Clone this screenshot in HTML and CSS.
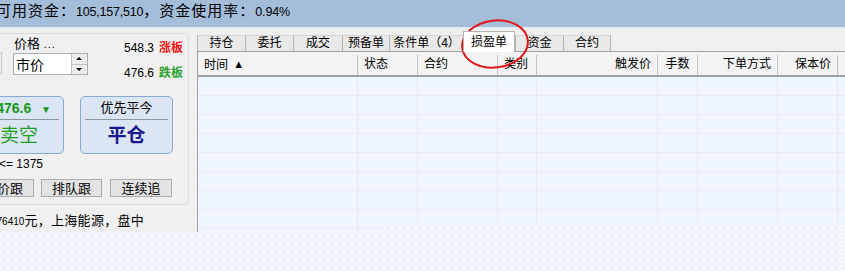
FILE: index.html
```html
<!DOCTYPE html>
<html lang="zh-CN">
<head>
    <meta charset="UTF-8">
    <title>交易面板</title>
    <link rel="stylesheet" href="styles.css">
</head>
<body>
    <!-- account summary -->
    <div class="topbar">
        <span class="topbar-text">可用资金：<span class="num">105,157,510</span>，资金使用率：<span class="num">0.94%</span></span>
    </div>

    <div class="main">
        <!-- order panel -->
        <div class="left">
            <div class="group">
                <div class="price-row">
                    <div class="stub-col"><div class="stub"></div></div>
                    <div class="price-col">
                        <div class="price-label">价格 <span class="dots">...</span></div>
                        <div class="spin">
                            <span class="spin-text">市价</span>
                            <div class="spin-btns">
                                <span class="spin-up"></span>
                                <span class="spin-down"></span>
                            </div>
                        </div>
                    </div>
                    <div class="limits">
                        <div class="limit"><span class="limit-val">548.3</span><span class="limit-up">涨板</span></div>
                        <div class="limit"><span class="limit-val">476.6</span><span class="limit-down">跌板</span></div>
                    </div>
                </div>

                <div class="big-row">
                    <div class="big">
                        <div class="big-top sell-top">476.6 <span class="arrow-down">▼</span></div>
                        <div class="big-main sell-main">卖空</div>
                    </div>
                    <div class="big">
                        <div class="big-top">优先平今</div>
                        <div class="big-main close-main">平仓</div>
                    </div>
                </div>

                <div class="qty">&lt;= 1375</div>

                <div class="small-row">
                    <button class="small-btn">对价跟</button>
                    <button class="small-btn">排队跟</button>
                    <button class="small-btn">连续追</button>
                </div>
            </div>
            <div class="status"><span class="num-s">476410</span>元，上海能源，盘中</div>
        </div>

        <!-- order lists -->
        <div class="right">
            <div class="tabs">
                <div class="tab w48">持仓</div>
                <div class="tab w48">委托</div>
                <div class="tab w49">成交</div>
                <div class="tab w47">预备单</div>
                <div class="tab w74">条件单（4）</div>
                <div class="tab active">损盈单</div>
                <div class="tab w48">资金</div>
                <div class="tab w48">合约</div>
            </div>
            <div class="grid">
                <div class="grid-head">
                    <div class="hcell">时间 <span class="sort">▲</span></div>
                    <div class="hcell">状态</div>
                    <div class="hcell">合约</div>
                    <div class="hcell">类别</div>
                    <div class="hcell right-al">触发价</div>
                    <div class="hcell center-al">手数</div>
                    <div class="hcell right-al">下单方式</div>
                    <div class="hcell right-al">保本价</div>
                    <div class="hcell"></div>
                </div>
                <div class="grid-row"><div></div><div></div><div></div><div></div><div></div><div></div><div></div><div></div><div></div></div>
                <div class="grid-row"><div></div><div></div><div></div><div></div><div></div><div></div><div></div><div></div><div></div></div>
                <div class="grid-row"><div></div><div></div><div></div><div></div><div></div><div></div><div></div><div></div><div></div></div>
                <div class="grid-row"><div></div><div></div><div></div><div></div><div></div><div></div><div></div><div></div><div></div></div>
                <div class="grid-row"><div></div><div></div><div></div><div></div><div></div><div></div><div></div><div></div><div></div></div>
                <div class="grid-row"><div></div><div></div><div></div><div></div><div></div><div></div><div></div><div></div><div></div></div>
                <div class="grid-row"><div></div><div></div><div></div><div></div><div></div><div></div><div></div><div></div><div></div></div>
                <div class="grid-row"><div></div><div></div><div></div><div></div><div></div><div></div><div></div><div></div><div></div></div>
                <div class="grid-row"><div></div><div></div><div></div><div></div><div></div><div></div><div></div><div></div><div></div></div>
            </div>
        </div>
    </div>

    <!-- cut edge of the screenshot -->
    <div class="cut-edge"></div>

    <!-- red highlight around the active tab -->
    <svg class="mark" width="90" height="60" viewBox="0 0 90 60">
        <ellipse cx="45" cy="30" rx="33" ry="23.5" fill="none" stroke="#e3161b" stroke-width="2" transform="rotate(-7 45 30)"/>
    </svg>
</body>
</html>
```

FILE: styles.css
```css
html, body {
    margin: 0;
    padding: 0;
}
body {
    width: 845px;
    height: 271px;
    overflow: hidden;
    position: relative;
    font-family: "Liberation Sans", "Noto Sans CJK SC", sans-serif;
    font-size: 13px;
    color: #000;
    background-color: #f2f5fc;
    background-image: radial-gradient(circle, #e4e8f0 0.7px, transparent 1px);
    background-size: 8px 8px;
}
.topbar {
    height: 27px;
    background: #a4bdd8;
    border-bottom: 2px solid #e3eaf2;
    white-space: nowrap;
    overflow: hidden;
}
.topbar-text {
    display: inline-block;
    margin-left: -4px;
    font-size: 15px;
    letter-spacing: 1px;
    line-height: 21px;
}
.num {
    font-size: 12.5px;
    letter-spacing: -0.2px;
}
.main {
    display: flex;
    height: 203px;
    background: #f0f0f0;
}

/* left order panel */
.left {
    width: 197px;
    flex: none;
    overflow: hidden;
}
.group {
    margin: 4px 0 0 -30px;
    width: 219px;
    box-sizing: border-box;
    height: 172px;
    border: 1px solid #d6dde4;
    border-radius: 3px;
    padding-left: 1px;
}
.price-row {
    display: flex;
    height: 62px;
}
.stub-col {
    width: 30px;
    padding-top: 18px;
}
.stub {
    width: 30px;
    height: 22px;
    box-sizing: border-box;
    border: 1px solid #c9c9c9;
    border-left: none;
}
.price-col {
    margin-left: 11px;
    width: 75px;
}
.price-label {
    margin-top: 3px;
    height: 14px;
    line-height: 14px;
    padding-left: 1px;
    font-size: 13px;
}
.dots {
    font-size: 11px;
    letter-spacing: 1px;
}
.spin {
    margin-top: 2px;
    height: 22px;
    box-sizing: border-box;
    border: 1px solid #abadb3;
    background: #fff;
    display: flex;
    align-items: center;
    justify-content: space-between;
}
.spin-text {
    padding-left: 2px;
    font-size: 14px;
}
.spin-btns {
    width: 15px;
    height: 20px;
    display: flex;
    flex-direction: column;
    border-left: 1px solid #c4c4c4;
}
.spin-up, .spin-down {
    flex: 1;
    background: #ececec;
    position: relative;
}
.spin-up {
    border-bottom: 1px solid #c4c4c4;
}
.spin-up::after, .spin-down::after {
    content: "";
    position: absolute;
    left: 4px;
    top: 3px;
    border-left: 3px solid transparent;
    border-right: 3px solid transparent;
}
.spin-up::after {
    border-bottom: 3px solid #000;
}
.spin-down::after {
    border-top: 3px solid #000;
}
.limits {
    margin-left: auto;
    margin-right: 5px;
    padding-top: 6px;
    display: flex;
    flex-direction: column;
    gap: 9px;
}
.limit {
    line-height: 16px;
    font-size: 12px;
}
.limit-val {
    margin-right: 5px;
}
.limit-up {
    color: #f01010;
    font-weight: bold;
}
.limit-down {
    color: #2ea12e;
    font-weight: bold;
}
.big-row {
    display: flex;
    gap: 16px;
}
.big {
    width: 93px;
    height: 58px;
    box-sizing: border-box;
    border: 1px solid #86a8d2;
    border-radius: 5px;
    background: #dbe6f4;
}
.big:first-child {
    width: 92px;
}
.big-top {
    margin: 0 4px;
    height: 22px;
    line-height: 22px;
    border-bottom: 1px solid #8e969f;
    text-align: center;
    font-size: 13px;
}
.sell-top {
    text-align: right;
    padding-right: 8px;
    color: #16981a;
    font-weight: bold;
    font-size: 14px;
}
.arrow-down {
    font-size: 10px;
    margin-left: 6px;
}
.big-main {
    text-align: center;
    line-height: 32px;
    font-size: 19px;
}
.sell-main {
    color: #1e9e22;
    padding-left: 2px;
}
.close-main {
    color: #1b1b8f;
    font-weight: bold;
}
.qty {
    margin-top: 3px;
    padding-left: 27px;
    line-height: 14px;
    font-size: 12px;
}
.small-row {
    display: flex;
    gap: 7px;
    margin-top: 8px;
    padding-left: 1px;
}
.small-btn {
    width: 61px;
    height: 18px;
    padding: 0;
    border: 1px solid #adadad;
    background: #e3e3e3;
    font-family: "Noto Sans CJK SC", sans-serif;
    font-size: 13px;
    line-height: 16px;
}
.small-btn:last-child {
    width: 62px;
    margin-left: 1px;
}
.status {
    margin-top: 8px;
    margin-left: -9px;
    line-height: 16px;
    font-size: 13px;
    letter-spacing: 0.3px;
    white-space: nowrap;
}
.num-s {
    font-size: 10px;
    letter-spacing: 0;
}

/* right lists */
.right {
    flex: 1;
    display: flex;
    flex-direction: column;
    min-width: 0;
}
.tabs {
    height: 22px;
    display: flex;
    align-items: flex-end;
}
.tab {
    height: 16px;
    box-sizing: border-box;
    border-left: 1px solid #b3b3b3;
    border-top: 1px solid #d4d4d4;
    background: #e9e9e9;
    text-align: center;
    line-height: 15px;
    font-size: 12px;
    white-space: nowrap;
}
.w47 { width: 47px; }
.w48 { width: 48px; }
.w49 { width: 49px; }
.w74 { width: 74px; }
.tab:last-child {
    border-right: 1px solid #b3b3b3;
}
.tab.active {
    width: 52px;
    height: 21px;
    margin-bottom: -1px;
    position: relative;
    z-index: 1;
    background: #fff;
    border: 1px solid #b3b3b3;
    border-bottom: none;
    line-height: 20px;
}
.grid {
    flex: 1;
    border-top: 1px solid #a0a0a0;
    border-left: 1px solid #a0a0a0;
    background: #f0f6fd;
    overflow: hidden;
}
.grid-head, .grid-row {
    display: grid;
    grid-template-columns: 160px 60px 80px 39px 121px 40px 80px 60px 100px;
}
.grid-head {
    height: 25px;
    box-sizing: border-box;
    border-bottom: 2px solid #a0a0a0;
    background: #f3f3f3;
}
.hcell {
    box-sizing: border-box;
    border-right: 1px solid #c2c2c2;
    margin-top: 3px;
    padding: 0 6px;
    line-height: 18px;
    font-size: 12px;
    white-space: nowrap;
}
.right-al {
    text-align: right;
}
.center-al {
    text-align: center;
}
.sort {
    font-size: 11px;
    margin-left: 2px;
    vertical-align: 1px;
}
.grid-row {
    height: 19px;
}
.grid-row div {
    border-right: 1px solid #e7e9ef;
    border-bottom: 1px solid #eaebee;
}
.cut-edge {
    position: absolute;
    left: 383px;
    top: 223px;
    width: 462px;
    height: 9px;
    background-color: #f2f5fc;
    background-image: radial-gradient(circle, #e4e8f0 0.7px, transparent 1px);
    background-size: 8px 8px;
    background-position: -383px -223px;
}
.mark {
    position: absolute;
    left: 450px;
    top: 14px;
}
```
